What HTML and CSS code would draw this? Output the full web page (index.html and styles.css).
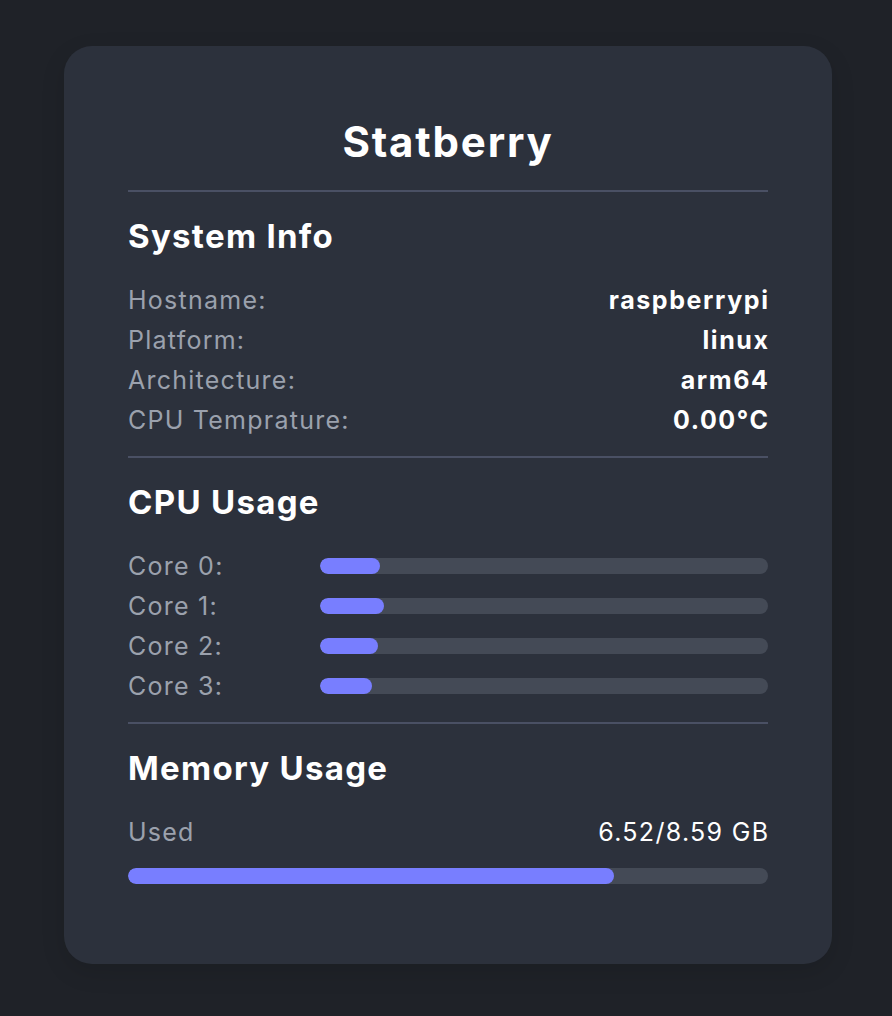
FILE: index.html
```html
<!DOCTYPE html>
<html>
<head>
<meta charset="utf-8">
<link rel="stylesheet" href="styles.css">
</head>
<body>
<main class="page">
  <section class="card">
    <h1 class="title">Statberry</h1>
    <hr class="divider">
    <h2 class="section-title">System Info</h2>
    <div class="info-list">
      <div class="info-row"><span class="label">Hostname:</span><span class="value">raspberrypi</span></div>
      <div class="info-row"><span class="label">Platform:</span><span class="value">linux</span></div>
      <div class="info-row"><span class="label">Architecture:</span><span class="value">arm64</span></div>
      <div class="info-row"><span class="label">CPU Temprature:</span><span class="value">0.00°C</span></div>
    </div>
    <hr class="divider">
    <h2 class="section-title">CPU Usage</h2>
    <div class="core-list">
      <div class="core-row"><span class="label core-label">Core 0:</span><div class="track"><div class="fill" style="width:13.4%"></div></div></div>
      <div class="core-row"><span class="label core-label">Core 1:</span><div class="track"><div class="fill" style="width:14.3%"></div></div></div>
      <div class="core-row"><span class="label core-label">Core 2:</span><div class="track"><div class="fill" style="width:12.9%"></div></div></div>
      <div class="core-row"><span class="label core-label">Core 3:</span><div class="track"><div class="fill" style="width:11.6%"></div></div></div>
    </div>
    <hr class="divider">
    <h2 class="section-title">Memory Usage</h2>
    <div class="mem-row"><span class="label">Used</span><span class="mem-value">6.52/8.59 GB</span></div>
    <div class="track mem-track"><div class="fill" style="width:75.9%"></div></div>
  </section>
</main>
</body>
</html>
```

FILE: styles.css
```css
* { box-sizing: border-box; }
html, body {
  margin: 0;
  padding: 0;
  background: #1f2228;
}
body {
  font-family: Inter, "Noto Sans", sans-serif;
  color: #ffffff;
  min-height: 1016px;
}
.page {
  padding: 46px 60px 52px 64px;
}
.card {
  width: 768px;
  background: #2c313c;
  border-radius: 28px;
  padding: 64px 64px 80px;
  box-shadow: 0 8px 24px rgba(0,0,0,0.12);
}
.title {
  margin: 0;
  font-size: 42px;
  line-height: 64px;
  font-weight: 700;
  letter-spacing: 1.8px;
  text-align: center;
}
.divider {
  border: 0;
  height: 2px;
  background: #4a5064;
  margin: 16px 0 20px;
}
.section-title {
  margin: 0 0 20px;
  font-size: 33px;
  line-height: 48px;
  font-weight: 700;
  letter-spacing: 1.3px;
}
.info-row,
.core-row,
.mem-row {
  display: flex;
  align-items: center;
  height: 40px;
  font-size: 25px;
}
.info-row,
.mem-row {
  justify-content: space-between;
}
.label {
  color: #9ba1ad;
  font-weight: 400;
  letter-spacing: 1.25px;
}
.value {
  font-weight: 700;
  color: #ffffff;
  letter-spacing: 1.6px;
  margin-right: -1.6px;
}
.core-label {
  width: 192px;
  flex: none;
}
.track {
  flex: 1;
  height: 16px;
  border-radius: 8px;
  background: #444a56;
  overflow: hidden;
}
.fill {
  height: 100%;
  border-radius: 8px;
  background: #787eff;
}
.mem-value {
  color: #ffffff;
  letter-spacing: 1.3px;
  margin-right: -1.3px;
}
.mem-track {
  margin-top: 16px;
}
```
